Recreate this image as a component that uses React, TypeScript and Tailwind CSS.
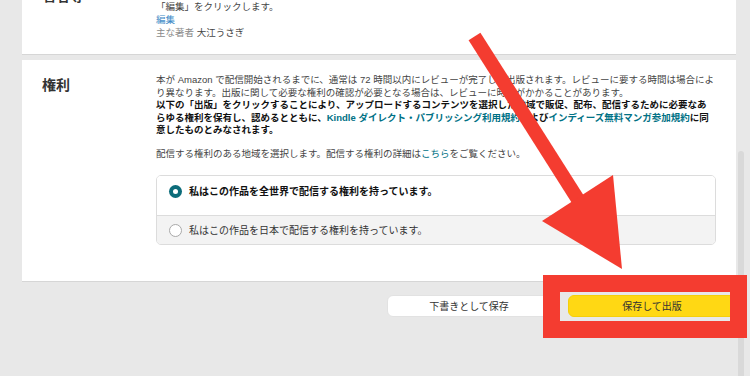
// KDP publish page: rights section with the publish buttons, plus a red callout arrow.

const font = "font-['Liberation_Sans','Noto_Sans_CJK_JP',sans-serif]";

function Radio({ checked }: { checked: boolean }) {
  if (checked) {
    return (
      <span className="flex h-[13px] w-[13px] shrink-0 items-center justify-center rounded-full bg-[#0c6c7a]">
        <span className="h-[5px] w-[5px] rounded-full bg-white" />
      </span>
    );
  }
  return <span className="h-[13px] w-[13px] shrink-0 rounded-full border border-[#a9a9a9] bg-white" />;
}

function Callout() {
  return (
    <svg className="pointer-events-none absolute inset-0" width="750" height="376" viewBox="0 0 750 376">
      <line x1="474.5" y1="36.5" x2="584" y2="209" stroke="#f43c30" strokeWidth="14" />
      <polygon points="613,175 542,221 622,269" fill="#f43c30" />
      <rect x="551.5" y="283.5" width="187" height="46" fill="none" stroke="#f43c30" strokeWidth="17" />
    </svg>
  );
}

export default function App() {
  return (
    <div className={`relative flex h-[376px] w-[750px] overflow-hidden bg-[#e8e8e8] ${font}`}>
      <div className="flex w-[736px] shrink-0 flex-col pl-[22px]">
        {/* Author section, scrolled mostly out of view */}
        <div className="-mt-[12px] flex border-b border-[#d6d6d6] bg-white pb-[15px]">
          <div className="w-[134px] shrink-0 pl-[20px] text-[14px] font-bold leading-[16px] text-[#333]">著者等</div>
          <div className="pt-[13px] text-[9.5px] leading-[12.75px] text-[#444]">
            <p>「編集」をクリックします。</p>
            <p className="text-[#3d89c6]">編集</p>
            <p>
              <span className="text-[#8a8a8a]">主な著者</span> 大江うさぎ
            </p>
          </div>
        </div>

        {/* Rights section */}
        <div className="mt-[5px] flex border-b border-[#d6d6d6] bg-white pb-[36px] pt-[14px]">
          <div className="mt-[3px] w-[134px] shrink-0 pl-[20px] text-[14px] font-bold leading-[16px] text-[#333]">権利</div>
          <div className="w-[560px] whitespace-nowrap text-[9.5px] leading-[12.5px] text-[#444]">
            <p>
              本が Amazon で配信開始されるまでに、通常は 72 時間以内にレビューが完了して出版されます。レビューに要する時間は場合によ
              <br />
              り異なります。出版に関して必要な権利の確認が必要となる場合は、レビューに時間がかかることがあります。
            </p>
            <p className="font-bold text-[#111]">
              以下の「出版」をクリックすることにより、アップロードするコンテンツを選択した地域で販促、配布、配信するために必要なあ
              <br />
              らゆる権利を保有し、認めるとともに、
              <span className="text-[#007185]">Kindle ダイレクト・パブリッシング利用規約</span>
              および
              <span className="text-[#007185]">インディーズ無料マンガ参加規約</span>
              に同
              <br />
              意したものとみなされます。
            </p>
            <p className="mt-[11px]">
              配信する権利のある地域を選択します。配信する権利の詳細は<span className="text-[#007185]">こちら</span>をご覧ください。
            </p>

            <div className="mt-[15px] overflow-hidden rounded-[5px] border border-[#dcdcdc]">
              <div className="flex h-[39px] items-start gap-[7px] bg-white px-[12px] pt-[9px]">
                <Radio checked />
                <span className="text-[10px] font-bold leading-[13px] text-[#111]">私はこの作品を全世界で配信する権利を持っています。</span>
              </div>
              <div className="flex h-[29px] items-center gap-[7px] border-t border-[#dcdcdc] bg-[#f3f3f3] px-[12px]">
                <Radio checked={false} />
                <span className="text-[10px] leading-[13px] text-[#333]">私はこの作品を日本で配信する権利を持っています。</span>
              </div>
            </div>
          </div>
        </div>

        {/* Actions */}
        <div className="mt-[13px] flex justify-end gap-[17px]">
          <button className="h-[22px] w-[164px] rounded-[6px] border border-[#e2e2e2] bg-white text-[10px] text-[#333]">
            下書きとして保存
          </button>
          <button className="h-[22px] w-[168px] rounded-[6px] border border-[#f5cf0a] bg-[#ffd814] text-[10px] text-[#333]">
            保存して出版
          </button>
        </div>
      </div>

      {/* Scrollbar gutter */}
      <div className="flex flex-1 flex-col pt-[151px]">
        <div className="ml-[2px] w-[6px] flex-1 rounded-t-full bg-[#d9d9d9]" />
      </div>

      <Callout />
    </div>
  );
}
